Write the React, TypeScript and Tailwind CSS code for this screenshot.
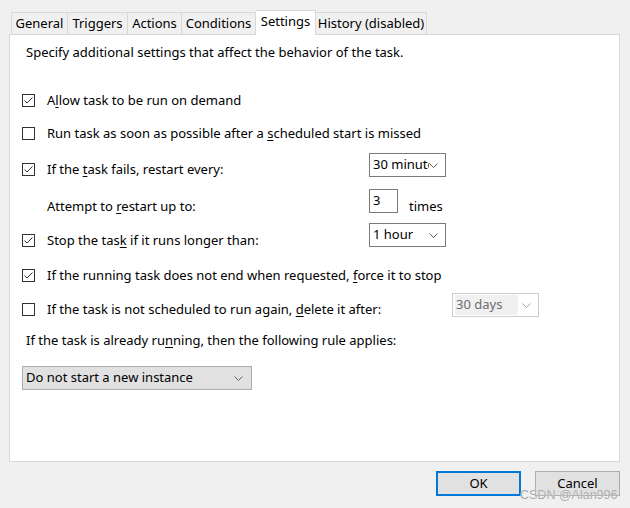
import React from 'react'

const font = { fontFamily: '"Noto Sans", "Open Sans", sans-serif' }

function Check({ checked }: { checked: boolean }) {
  return (
    <svg width="13" height="13" viewBox="0 0 13 13" className="shrink-0">
      <rect x="0.5" y="0.5" width="12" height="12" fill="#fff" stroke="#333" />
      {checked && (
        <path d="M2.5 6.5 L5 9 L10.5 3.5" fill="none" stroke="#333" strokeWidth="1" />
      )}
    </svg>
  )
}

function Chevron({ color = '#606060' }: { color?: string }) {
  return (
    <svg width="9" height="5" viewBox="0 0 9 5" className="shrink-0">
      <path d="M0.5 0.5 L4.5 4.5 L8.5 0.5" fill="none" stroke={color} strokeWidth="1" />
    </svg>
  )
}

function Select({ value, className = '' }: { value: string; className?: string }) {
  return (
    <div
      className={`flex h-[24px] w-[77px] items-center overflow-hidden border border-[#7a7a7a] bg-white pl-[3px] pr-[7px] ${className}`}
    >
      <span className="flex-1 overflow-hidden whitespace-nowrap">{value}</span>
      <Chevron />
    </div>
  )
}

function CheckRow({
  checked,
  children,
  height,
}: {
  checked: boolean
  children: React.ReactNode
  height: string
}) {
  return (
    <div className={`flex ${height}`}>
      <div className="flex items-center pl-[12px]">
        <Check checked={checked} />
        <span className="ml-[12px] whitespace-nowrap pt-[2px]">{children}</span>
      </div>
    </div>
  )
}

const tabs = [
  { label: 'General', w: 'w-[57px]' },
  { label: 'Triggers', w: 'w-[60px]' },
  { label: 'Actions', w: 'w-[54px]' },
  { label: 'Conditions', w: 'w-[74px]' },
  { label: 'Settings', w: 'w-[60px]', active: true },
  { label: 'History (disabled)', w: 'w-[111px]' },
]

export default function App() {
  return (
    <div
      className="relative h-[508px] w-[630px] overflow-hidden bg-[#f0f0f0] pl-[9px] pt-[10px] text-[13px] text-black"
      style={font}
    >
      {/* tab strip */}
      <div className="relative z-10 flex h-[24px] items-end pl-[2px]">
        {tabs.map((t, i) =>
          t.active ? (
            <div
              key={t.label}
              className={`-mb-[1px] flex h-[25px] items-center justify-center whitespace-nowrap border border-b-0 border-l-0 border-[#d9d9d9] bg-white pb-[2px] ${t.w}`}
            >
              {t.label}
            </div>
          ) : (
            <div
              key={t.label}
              className={`flex h-[22px] items-center justify-center whitespace-nowrap border-r border-t border-[#d9d9d9] bg-[#f0f0f0] pt-[1px] ${i === 0 ? 'border-l' : ''} ${t.w}`}
            >
              {t.label}
            </div>
          )
        )}
      </div>

      {/* panel */}
      <div className="h-[428px] w-[611px] border border-[#d9d9d9] bg-white pt-[5px]">
        <div className="flex h-[24px] items-center pl-[16px] pt-[2px]">
          <span>Specify additional settings that affect the behavior of the task.</span>
        </div>

        <div className="mt-[19px]">
          <CheckRow checked height="h-[34px]">
            A<u className="underline-offset-2">l</u>low task to be run on demand
          </CheckRow>
          <CheckRow checked={false} height="h-[32px]">
            Run task as soon as possible after a <u className="underline-offset-2">s</u>cheduled start is
            missed
          </CheckRow>
          <div className="flex h-[40px]">
            <div className="flex w-[359px] items-center pl-[12px]">
              <Check checked />
              <span className="ml-[12px] whitespace-nowrap pt-[2px]">
                If the <u className="underline-offset-2">t</u>ask fails, restart every:
              </span>
            </div>
            <Select value="30 minutes" className="mt-[4px]" />
          </div>
          <div className="flex h-[34px]">
            <div className="flex w-[359px] items-center pl-[37px] pt-[2px]">
              <span className="whitespace-nowrap">
                Attempt to <u className="underline-offset-2">r</u>estart up to:
              </span>
            </div>
            <div className="flex h-[24px] w-[29px] items-center border border-[#7a7a7a] pl-[3px]">3</div>
            <div className="ml-[11px] flex items-center pt-[2px]">times</div>
          </div>
          <div className="flex h-[34px]">
            <div className="flex w-[359px] items-center pl-[12px]">
              <Check checked />
              <span className="ml-[12px] whitespace-nowrap pt-[2px]">
                Stop the tas<u className="underline-offset-2">k</u> if it runs longer than:
              </span>
            </div>
            <Select value="1 hour" />
          </div>
          <CheckRow checked height="h-[36px]">
            If the running task does not end when requested, <u className="underline-offset-2">f</u>orce it to
            stop
          </CheckRow>
          <div className="flex h-[32px]">
            <div className="flex w-[442px] items-center pl-[12px]">
              <Check checked={false} />
              <span className="ml-[12px] whitespace-nowrap pt-[2px]">
                If the task is not scheduled to run again, <u className="underline-offset-2">d</u>elete it after:
              </span>
            </div>
            <div className="flex h-[24px] w-[87px] items-center border border-[#cccccc] bg-white pl-[2px] pr-[7px] text-[#6d6d6d]">
              <span className="flex h-[20px] w-[63px] items-center bg-[#f0f0f0] pl-[1px]">30 days</span>
              <span className="flex-1" />
              <Chevron color="#a0a0a0" />
            </div>
          </div>
          <div className="flex h-[30px] items-center pl-[16px] pt-[2px]">
            <span className="whitespace-nowrap">
              If the task is already ru<u className="underline-offset-2">n</u>ning, then the following rule applies:
            </span>
          </div>
          <div className="ml-[12px] mt-[11px] flex h-[24px] w-[230px] items-center border border-[#adadad] bg-[#e1e1e1] pl-[3px] pr-[8px]">
            <span className="flex-1">Do not start a new instance</span>
            <Chevron />
          </div>
        </div>
      </div>

      {/* buttons */}
      <div className="mt-[9px] flex justify-end gap-[14px] pr-[10px]">
        <button className="flex h-[25px] w-[85px] items-center justify-center border-2 border-[#0078d7] bg-[#e1e1e1]">
          OK
        </button>
        <button className="flex h-[25px] w-[85px] items-center justify-center border border-[#adadad] bg-[#e1e1e1]">
          Cancel
        </button>
      </div>

      {/* watermark */}
      <div
        className="absolute left-[520px] top-[486px] whitespace-nowrap text-[12.5px] text-[#a8a8a8] [text-shadow:0_0_1px_#fff]"
        style={{ fontFamily: '"Liberation Sans", sans-serif' }}
      >
        CSDN @Alan996
      </div>
    </div>
  )
}
